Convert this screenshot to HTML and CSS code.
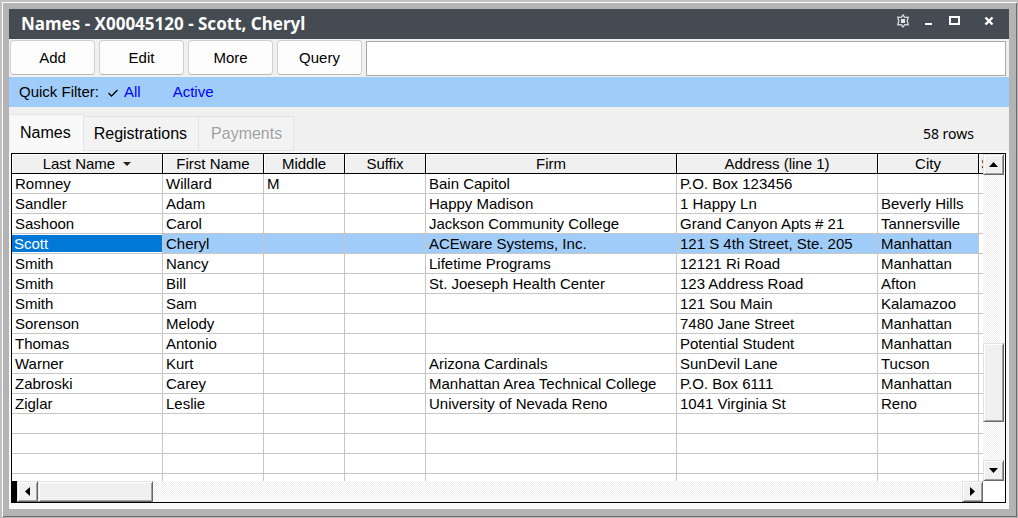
FILE: index.html
```html
<!DOCTYPE html>
<html lang="en">
<head>
<meta charset="utf-8">
<title>Names - X00045120 - Scott, Cheryl</title>
<link rel="stylesheet" href="styles.css">
</head>
<body>
<div class="frame">
<main class="window">
  <header class="titlebar">
    <h1 class="title">Names - X00045120 - Scott, Cheryl</h1>
    <div class="window-controls">
      <button class="control" aria-label="Settings"><svg width="14" height="14" viewBox="0 0 14 14"><path d="M7 1 L8.7 3.4 L12.2 3.2 L11.2 7 L12.2 10.8 L8.7 10.6 L7 13 L5.3 10.6 L1.8 10.8 L2.8 7 L1.8 3.2 L5.3 3.4 Z" fill="none" stroke="#d0d3d6" stroke-width="1.4"/><rect x="5" y="5" width="4" height="4" fill="#e4e4e4"/></svg></button>
      <button class="control" aria-label="Minimize"><svg width="14" height="14" viewBox="0 0 14 14"><path d="M3 9h7v2H3z" fill="#fff"/></svg></button>
      <button class="control" aria-label="Maximize"><svg width="14" height="14" viewBox="0 0 14 14"><path d="M1 2h11v9H1zM3 4v5h7V4z" fill="#fff" fill-rule="evenodd"/></svg></button>
      <button class="control control-close" aria-label="Close"><svg width="14" height="14" viewBox="0 0 14 14"><path d="M3.5 3.5 L10.5 10.5 M10.5 3.5 L3.5 10.5" stroke="#fff" stroke-width="2.4"/></svg></button>
    </div>
  </header>

  <div class="toolbar">
    <button class="tool">Add</button>
    <button class="tool">Edit</button>
    <button class="tool">More</button>
    <button class="tool">Query</button>
    <input class="search" type="text" aria-label="Search">
  </div>

  <nav class="filterbar">
    <span class="filter-label">Quick Filter:</span>
    <svg class="check" width="10" height="8" viewBox="0 0 10 8"><path d="M0.5 4 L3.5 7 L9.5 1" fill="none" stroke="#000" stroke-width="1.3"/></svg>
    <a class="filter filter-all" href="#all">All</a>
    <a class="filter" href="#active">Active</a>
  </nav>

  <div class="tabs">
    <button class="tab tab-active">Names</button>
    <button class="tab">Registrations</button>
    <button class="tab" disabled>Payments</button>
    <span class="row-count">58 rows</span>
  </div>

  <div class="panel">
    <div class="grid">
      <div class="viewport">
        <table class="names">
          <colgroup><col class="c-last"><col class="c-first"><col class="c-short"><col class="c-short"><col class="c-firm"><col class="c-address"><col class="c-city"><col class="c-state"></colgroup>
          <thead><tr><th>Last Name <svg class="sort" width="8" height="4" viewBox="0 0 8 4"><path d="M0 0h8L4 4z" fill="#222"/></svg></th><th>First Name</th><th>Middle</th><th>Suffix</th><th>Firm</th><th>Address (line 1)</th><th>City</th><th>State</th></tr></thead>
          <tbody>
            <tr><td>Romney</td><td>Willard</td><td>M</td><td></td><td>Bain Capitol</td><td>P.O. Box 123456</td><td></td><td></td></tr>
            <tr><td>Sandler</td><td>Adam</td><td></td><td></td><td>Happy Madison</td><td>1 Happy Ln</td><td>Beverly Hills</td><td></td></tr>
            <tr><td>Sashoon</td><td>Carol</td><td></td><td></td><td>Jackson Community College</td><td>Grand Canyon Apts # 21</td><td>Tannersville</td><td></td></tr>
            <tr class="selected"><td class="current">Scott</td><td>Cheryl</td><td></td><td></td><td>ACEware Systems, Inc.</td><td>121 S 4th Street, Ste. 205</td><td>Manhattan</td><td></td></tr>
            <tr><td>Smith</td><td>Nancy</td><td></td><td></td><td>Lifetime Programs</td><td>12121 Ri Road</td><td>Manhattan</td><td></td></tr>
            <tr><td>Smith</td><td>Bill</td><td></td><td></td><td>St. Joeseph Health Center</td><td>123 Address Road</td><td>Afton</td><td></td></tr>
            <tr><td>Smith</td><td>Sam</td><td></td><td></td><td></td><td>121 Sou Main</td><td>Kalamazoo</td><td></td></tr>
            <tr><td>Sorenson</td><td>Melody</td><td></td><td></td><td></td><td>7480 Jane Street</td><td>Manhattan</td><td></td></tr>
            <tr><td>Thomas</td><td>Antonio</td><td></td><td></td><td></td><td>Potential Student</td><td>Manhattan</td><td></td></tr>
            <tr><td>Warner</td><td>Kurt</td><td></td><td></td><td>Arizona Cardinals</td><td>SunDevil Lane</td><td>Tucson</td><td></td></tr>
            <tr><td>Zabroski</td><td>Carey</td><td></td><td></td><td>Manhattan Area Technical College</td><td>P.O. Box 6111</td><td>Manhattan</td><td></td></tr>
            <tr><td>Ziglar</td><td>Leslie</td><td></td><td></td><td>University of Nevada Reno</td><td>1041 Virginia St</td><td>Reno</td><td></td></tr>
            <tr><td></td><td></td><td></td><td></td><td></td><td></td><td></td><td></td></tr>
            <tr><td></td><td></td><td></td><td></td><td></td><td></td><td></td><td></td></tr>
            <tr><td></td><td></td><td></td><td></td><td></td><td></td><td></td><td></td></tr>
            <tr><td></td><td></td><td></td><td></td><td></td><td></td><td></td><td></td></tr>
          </tbody>
        </table>
      </div>
      <div class="vbar">
        <button class="bevel arrow" aria-label="Scroll up"><svg width="9" height="5" viewBox="0 0 9 5"><path d="M0 5h9L4.5 0z"/></svg></button>
        <div class="track-before"></div>
        <div class="bevel thumb-v"></div>
        <div class="track-after"></div>
        <button class="bevel arrow" aria-label="Scroll down"><svg width="9" height="5" viewBox="0 0 9 5"><path d="M0 0h9L4.5 5z"/></svg></button>
      </div>
      <div class="hbar">
        <span class="splitter"></span>
        <button class="bevel arrow" aria-label="Scroll left"><svg width="5" height="9" viewBox="0 0 5 9"><path d="M5 0v9L0 4.5z"/></svg></button>
        <div class="bevel thumb-h"></div>
        <div class="track-rest"></div>
        <button class="bevel arrow" aria-label="Scroll right"><svg width="5" height="9" viewBox="0 0 5 9"><path d="M0 0v9L5 4.5z"/></svg></button>
      </div>
      <div class="corner"></div>
    </div>
  </div>
</main>
</div>
</body>
</html>
```

FILE: styles.css
```css
* { box-sizing: border-box; }

body {
  margin: 0;
  height: 100vh;
  background: #b4b4b4;
  font: 15px/20px "Liberation Sans", Arial, sans-serif;
  color: #000;
  overflow: hidden;
}

button, input { font: inherit; color: inherit; margin: 0; }

.frame {
  height: 100%;
  padding: 7px 8px 8px 7px;
  background: #b4b4b4;
  border: 1px solid;
  border-width: 2px 1px 1px 2px;
  border-color: #c0c0c0 #b4b4b4 #b4b4b4 #c0c0c0;
  box-shadow: inset 1px 1px #fff, inset -1px -1px #6c6c6c;
}

.window { height: 100%; display: flex; flex-direction: column; background: #f0f0f0; }

.titlebar {
  height: 30px;
  flex: none;
  display: flex;
  align-items: center;
  justify-content: space-between;
  padding: 0 13px 0 12px;
  background: #444b52;
  color: #fff;
}
.title { margin: 0; font: bold 17px/24px "Noto Sans", "Open Sans", sans-serif; }
.window-controls { align-self: flex-start; display: flex; align-items: center; height: 24px; gap: 12px; }
.control { width: 14px; height: 14px; padding: 0; border: 0; background: none; }
.control svg { display: block; }
.control-close { margin-left: 8px; }

.toolbar { flex: none; display: flex; gap: 4px; height: 38px; padding: 1px 3px 1px 1px; }
.tool {
  width: 85px;
  height: 35px;
  padding: 0;
  background: #fdfdfd;
  border: 1px solid #d0d0d0;
  border-bottom-color: #b8b8b8;
  border-radius: 4px;
}
.search { flex: 1; align-self: flex-end; min-width: 0; height: 35px; padding: 0 6px; border: 1px solid #a9a9ad; background: #fff; }

.filterbar { flex: none; display: flex; align-items: center; height: 30px; padding-left: 10px; background: #a0ccfa; }
.check { margin: 2px 6px 0 9px; }
.filter { color: #00f; text-decoration: none; }
.filter-all { margin-right: 32px; }

.tabs { flex: none; display: flex; align-items: flex-end; height: 44px; padding: 0 35px 0 1px; font-size: 16px; }
.tab {
  height: 35px;
  padding: 0 11px 0 10px;
  background: #f3f3f3;
  border: 1px solid #e3e3e3;
  border-left: 0;
}
.tab-active { height: 37px; padding: 0 12px 0 10px; background: #f9f9f9; border-bottom: 0; }
.tab:disabled { padding-left: 12px; color: #a0a0a0; text-shadow: 1px 1px #fff; }
.row-count { margin-left: auto; font: 14px/34px "Noto Sans", "Open Sans", sans-serif; }

.panel { flex: 1; min-height: 0; padding: 2px 3px 6px 2px; background: #f9f9f9; }

.grid {
  height: 100%;
  display: grid;
  grid-template: minmax(0, 1fr) 21px / minmax(0, 1fr) 22px;
  border: 1px solid #000;
  background: #fff;
}

.viewport { overflow: hidden; }
.names { width: 1007px; table-layout: fixed; border-collapse: separate; border-spacing: 0; }
.c-last { width: 151px; }
.c-first, .c-city { width: 101px; }
.c-short { width: 81px; }
.c-firm { width: 251px; }
.c-address { width: 201px; }
.c-state { width: 40px; }
.names th {
  height: 20px;
  padding: 0;
  font-weight: normal;
  line-height: 19px;
  background: #f0f0f0;
  border-right: 1px solid #000;
  border-bottom: 1px solid #000;
  box-shadow: inset 1px 1px #fff;
}
.sort { margin-left: 4px; vertical-align: 3px; }
.names td {
  height: 20px;
  padding: 0 3px;
  line-height: 19px;
  white-space: nowrap;
  border-right: 1px solid #c6c6c6;
  border-bottom: 1px solid #c6c6c6;
}
.selected td:not(:last-child) { background: #a0ccfa; }
.names .selected .current { padding-left: 2px; background: #0078d7; color: #fff; box-shadow: inset 0 1px #fff, inset 0 -1px #fff; }

.vbar { display: flex; flex-direction: column; }
.hbar { display: flex; }
.vbar, .hbar { background: repeating-conic-gradient(#fff 0 25%, #f0f0f0 0 50%) 0 0 / 2px 2px; }
.bevel {
  flex: none;
  background: #f0f0f0;
  border: 1px solid;
  border-color: #e3e3e3 #696969 #696969 #e3e3e3;
  box-shadow: inset 1px 1px #fff, inset -1px -1px #a0a0a0;
}
.arrow { width: 21px; height: 21px; padding: 0; display: grid; place-items: center; }
.thumb-v { width: 21px; height: 79px; }
.thumb-h { width: 115px; height: 21px; }
.track-before { flex: 169 0 0; }
.track-after { flex: 38 0 0; }
.track-rest { flex: 1; }
.splitter { width: 5px; background: #000; }
.corner { background: #fff; }
```
